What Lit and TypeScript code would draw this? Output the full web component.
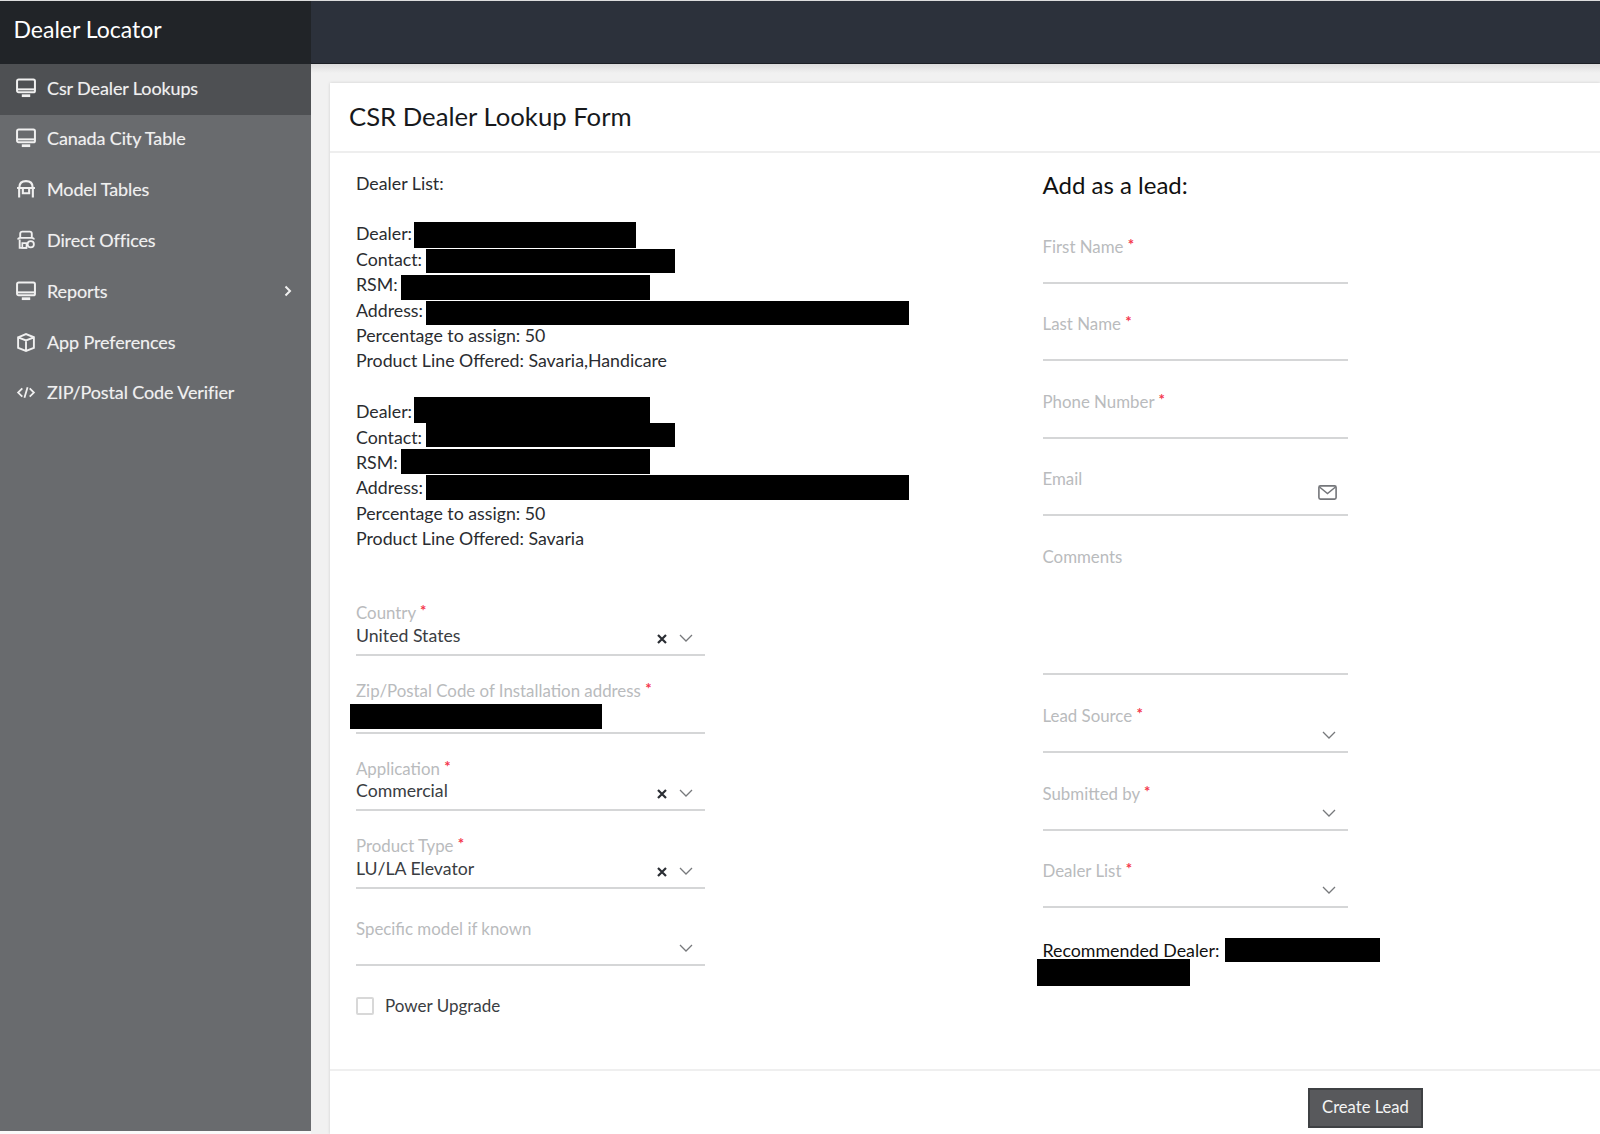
import { LitElement, html, css, svg } from "lit";
import { customElement } from "lit/decorators.js";

const monitor = svg`<path d="M2.500 1.500h14a1.500 1.500 0 0 1 1.500 1.500v9a1.500 1.500 0 0 1-1.500 1.500h-14A1.500 1.500 0 0 1 1 12V3a1.500 1.500 0 0 1 1.500-1.500Z" fill="none" stroke="currentColor" stroke-width="1.900"/><path d="M1.500 10.800h16" stroke="currentColor" stroke-width="1.900"/><path d="M5.500 16.800h8" stroke="currentColor" stroke-width="2.600"/>`;
const icons: Record<string, unknown> = {
  monitor,
  seat: svg`<path d="M3.200 8c0-4.500 2.500-6 6.300-6s6.300 1.500 6.300 6" fill="none" stroke="currentColor" stroke-width="2"/><path d="M1 8.600h17M3 8.600v9M16 8.600v9M6.500 9v4.500h6V9" fill="none" stroke="currentColor" stroke-width="2"/>`,
  shop: svg`<path d="M4 7.500V3.500A2 2 0 0 1 6 1.500h7a2 2 0 0 1 2 2v4M2 9c0-1 1-1.500 2-1.500h11c1 0 2 .5 2 1.500M3.500 9v8h7" fill="none" stroke="currentColor" stroke-width="1.800"/><circle cx="14" cy="13.500" r="3" fill="none" stroke="currentColor" stroke-width="1.700"/><path d="M6 12.500h4V17H6z" fill="none" stroke="currentColor" stroke-width="1.600"/>`,
  box: svg`<path d="M2 5 9.500 2 17 5v10l-7.500 3L2 15Z M2 5l7.500 3L17 5M9.500 8v10" fill="none" stroke="currentColor" stroke-width="1.800"/>`,
  code: svg`<path d="M6 6 2 10l4 4M13 6l4 4-4 4M11 5 8 15" fill="none" stroke="currentColor" stroke-width="1.700"/>`,
};

const nav = [
  { icon: "monitor", label: "Csr Dealer Lookups", active: true },
  { icon: "monitor", label: "Canada City Table" },
  { icon: "seat", label: "Model Tables" },
  { icon: "shop", label: "Direct Offices" },
  { icon: "monitor", label: "Reports", more: true },
  { icon: "box", label: "App Preferences" },
  { icon: "code", label: "ZIP/Postal Code Verifier" },
];

const chevron = html`<svg class="chev" viewBox="0 0 14 8" width="14" height="8"><path d="M1 1l6 6 6-6" fill="none" stroke="currentColor" stroke-width="1.300"/></svg>`;
const cross = html`<svg class="cross" viewBox="0 0 10 10" width="10" height="10"><path d="M1 1l8 8M9 1l-8 8" fill="none" stroke="currentColor" stroke-width="2.200"/></svg>`;
const mail = html`<svg class="mail" viewBox="0 0 19 15" width="19" height="15"><rect x=".9" y=".9" width="17.200" height="13.200" rx="1.500" fill="none" stroke="currentColor" stroke-width="1.600"/><path d="M1.500 2l8 6.500 8-6.500" fill="none" stroke="currentColor" stroke-width="1.500"/></svg>`;

type BarRow = { label: string; basis: number; width: number; height: number; shift: number };

const group1: BarRow[] = [
  { label: "Dealer:", basis: 58, width: 222, height: 26, shift: 1.5 },
  { label: "Contact:", basis: 69.5, width: 249, height: 24, shift: 2.5 },
  { label: "RSM:", basis: 45, width: 249, height: 25, shift: 3 },
  { label: "Address:", basis: 69.5, width: 483.5, height: 24, shift: 3.5 },
];
const group2: BarRow[] = [
  { label: "Dealer:", basis: 58, width: 236, height: 26, shift: -1.5 },
  { label: "Contact:", basis: 69.5, width: 249, height: 24, shift: -1.5 },
  { label: "RSM:", basis: 45, width: 249, height: 25, shift: 0 },
  { label: "Address:", basis: 69.5, width: 483.5, height: 25, shift: 0 },
];

const dealer = (rows: BarRow[], product: string) => html`
  ${rows.map(
    (r) => html`<div class="row">
      <span class="lab" style="flex-basis:${r.basis}px">${r.label}</span>
      <span class="bar" style="width:${r.width}px;height:${r.height}px;margin-top:${r.shift * 2}px"></span>
    </div>`
  )}
  <div class="row">Percentage to assign: 50</div>
  <div class="row">Product Line Offered: ${product}</div>
`;

@customElement("app-root")
export class AppRoot extends LitElement {
  static styles = css`
    :host { display: block; width: 1600px; height: 1134px; overflow: hidden; font-family: Lato, "Open Sans", sans-serif; background: #fafafa; color: #33363b; }
    .shell { display: grid; grid-template-columns: 311px 1fr; grid-template-rows: 64px 1fr; height: 1134px; }
    .brand { background: #212428; color: #fff; font-size: 23px; padding: 0 0 8px 13.500px; display: flex; align-items: center; border-top: 1px solid #ddd; }
    .top { background: #2c313b; border-top: 1px solid #ddd; border-bottom: 1px solid #1c1f25; }
    .side { background: #696b6e; color: #f0f0f0; margin-bottom: 3px; }
    .item { height: 50.800px; box-sizing: border-box; padding: 0 0 3.500px 15.500px; display: flex; align-items: center; gap: 11.500px; font-size: 18px; letter-spacing: -.12px; text-shadow: 0 0 1px rgba(255,255,255,.35); }
    .item.active { background: #4e5053; }
    .item svg.ico { flex: none; width: 20px; height: 20px; }
    .more { margin-left: auto; margin-right: 19px; width: 8px; height: 12px; }
    .main { padding: 19px 0 0 19px; min-width: 0; background: linear-gradient(#dcdcdc, #f1f1f1 9px); }
    .card { background: #fff; height: 1051px; box-shadow: 0 0 3px rgba(0,0,0,.14); display: flex; flex-direction: column; }
    .head { height: 66px; padding: 0 0 2px 19px; border-bottom: 2px solid #eeeeee; display: flex; align-items: center; font-size: 25.700px; color: #17191c; }
    .body { flex: none; height: 916px; display: grid; grid-template-columns: 686.500px 305px; padding-left: 26px; }
    .left { padding-top: 17px; font-size: 17.750px; color: #2a2c30; }
    .row { height: 25.400px; display: flex; align-items: center; white-space: nowrap; }
    .gap { height: 25.400px; }
    .lab { flex: 0 0 auto; }
    .bar { background: #000; flex: none; }
    .fields { width: 349px; margin-top: 27.500px; }
    .field { height: 77.600px; display: flex; flex-direction: column; justify-content: flex-end; }
    .label { font-size: 16.850px; line-height: 22px; color: #b9bbbd; margin-bottom: -5px; }
    .filled .label { margin-bottom: .5px; }
    .label b { color: #f4364c; font-weight: 700; font-size: 15px; position: relative; top: -3px; }
    .control { height: 31px; box-sizing: border-box; border-bottom: 2px solid #d5d6d7; display: flex; align-items: flex-end; color: #3a3d42; font-size: 17.700px; }
    .value { line-height: 20px; padding-bottom: 8px; flex: 1; min-width: 0; }
    .chev { color: #77797c; margin: 0 12px 12px 12px; flex: none; }
    .cross { color: #2a2d33; margin-bottom: 10px; flex: none; }
    .mail { color: #74767a; margin: 0 11px 14px 0; flex: none; }
    .zipbar { height: 25px; width: 252px; margin: 0 0 3px -6px; background: #000; }
    .check { display: flex; align-items: center; gap: 11px; margin-top: 29px; font-size: 17px; color: #3a3d42; }
    .box { width: 14px; height: 14px; border: 2px solid #d8d8d8; border-radius: 2px; flex: none; }
    .right { padding-top: 16px; }
    .h2 { height: 37px; font-size: 24px; line-height: 32px; color: #111; margin: 0; font-weight: 400; }
    .tall { height: 158.200px; margin-bottom: 1px; }
    .tall .label { margin: 30px 0 auto; }
    .tall .control { height: 10px; }
    .rec { margin-top: 31px; font-size: 17.800px; color: #111; display: flex; align-items: center; height: 22px; white-space: nowrap; }
    .recbar { width: 155px; height: 24px; background: #000; margin-left: 6px; flex: none; }
    .rec2 { width: 153px; height: 27px; margin: -2px 0 0 -6px; background: #000; position: relative; }
    .foot { flex: 1; border-top: 2px solid #efefef; display: flex; align-items: flex-start; justify-content: flex-end; padding: 17px 177px 0 0; }
    .btn { width: 115px; height: 40px; box-sizing: border-box; border: 2px solid #3f4144; background: #58595c; color: #f4f4f4; font: 400 16.600px Lato, sans-serif; padding: 0 0 3px; }
  `;

  private field(label: string, req: boolean, value = "", opts: { clear?: boolean; chev?: boolean; mail?: boolean } = {}) {
    return html`<div class="field ${value ? "filled" : ""}">
      <div class="label">${label}${req ? html` <b>*</b>` : ""}</div>
      <div class="control">
        <span class="value">${value}</span>
        ${opts.clear ? cross : ""}${opts.chev ? chevron : ""}${opts.mail ? mail : ""}
      </div>
    </div>`;
  }

  render() {
    return html`<div class="shell">
      <div class="brand">Dealer Locator</div>
      <div class="top"></div>
      <nav class="side">
        ${nav.map((n) => html`<div class="item ${n.active ? "active" : ""}">
          <svg class="ico" viewBox="0 0 19 19">${icons[n.icon]}</svg>
          <span>${n.label}</span>
          ${n.more ? html`<svg class="more" viewBox="0 0 8 12"><path d="M1.500 1.500 6 6l-4.500 4.500" fill="none" stroke="currentColor" stroke-width="2"/></svg>` : ""}
        </div>`)}
      </nav>
      <main class="main">
        <section class="card">
          <div class="head">CSR Dealer Lookup Form</div>
          <div class="body">
            <div class="left">
              <div class="row">Dealer List:</div>
              <div class="gap"></div>
              ${dealer(group1, "Savaria,Handicare")}
              <div class="gap"></div>
              ${dealer(group2, "Savaria")}
              <div class="fields">
                ${this.field("Country", true, "United States", { clear: true, chev: true })}
                <div class="field filled">
                  <div class="label">Zip/Postal Code of Installation address <b>*</b></div>
                  <div class="control"><div class="zipbar"></div></div>
                </div>
                ${this.field("Application", true, "Commercial", { clear: true, chev: true })}
                ${this.field("Product Type", true, "LU/LA Elevator", { clear: true, chev: true })}
                ${this.field("Specific model if known", false, "", { chev: true })}
                <label class="check"><span class="box"></span>Power Upgrade</label>
              </div>
            </div>
            <div class="right">
              <h2 class="h2">Add as a lead:</h2>
              ${this.field("First Name", true)}
              ${this.field("Last Name", true)}
              ${this.field("Phone Number", true)}
              ${this.field("Email", false, "", { mail: true })}
              <div class="field tall">
                <div class="label">Comments</div>
                <div class="control"></div>
              </div>
              ${this.field("Lead Source", true, "", { chev: true })}
              ${this.field("Submitted by", true, "", { chev: true })}
              ${this.field("Dealer List", true, "", { chev: true })}
              <div class="rec">Recommended Dealer:<span class="recbar"></span></div>
              <div class="rec2"></div>
            </div>
          </div>
          <div class="foot"><button class="btn">Create Lead</button></div>
        </section>
      </main>
    </div>`;
  }
}
